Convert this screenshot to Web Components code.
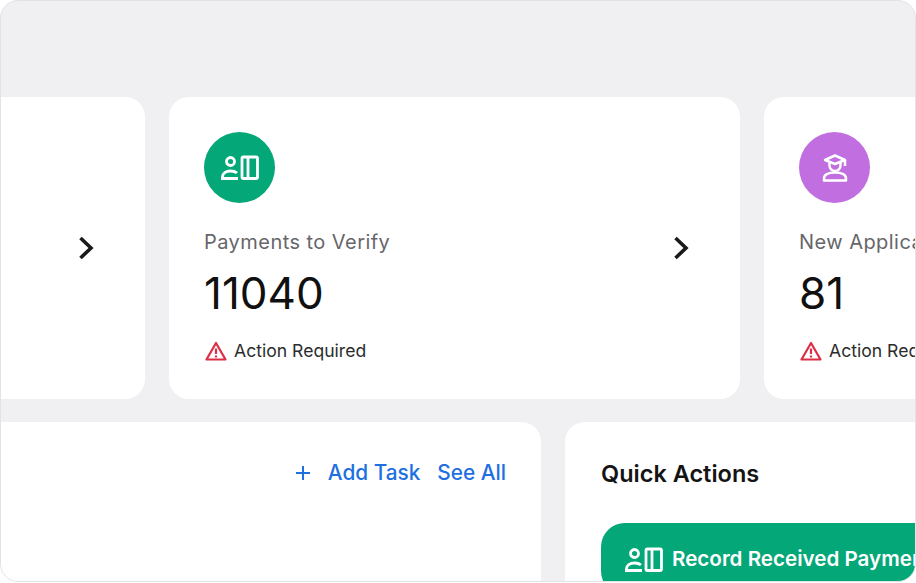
<!DOCTYPE html>
<html>
<head>
<meta charset="utf-8">
<title>Dashboard</title>
<style>
html, body { margin: 0; padding: 0; background: #fff; font-family: Inter, "Liberation Sans", sans-serif; }
</style>
</head>
<body>
<app-frame>
  <card-row>
    <stat-card></stat-card>
    <stat-card label="Payments to Verify" value="11040" tone="#04a777" icon="payment" note="Action Required"></stat-card>
    <stat-card label="New Applications" value="81" tone="#c16ee0" icon="student" note="Action Required"></stat-card>
  </card-row>
  <panel-row>
    <task-panel></task-panel>
    <quick-panel></quick-panel>
  </panel-row>
</app-frame>

<script>
/* icons */
const paymentIcon = `
<svg viewBox="0 0 38 25" width="38" height="25" fill="none" stroke="#fff" stroke-width="2.800" stroke-linejoin="round">
  <circle cx="9.500" cy="6.500" r="4"/>
  <path d="M1.500 23.500v-1.500c0-3.800 3.500-6 8-6 2.600 0 5 .7 6.500 2M0 23.500h17"/>
  <rect x="21" y="2" width="15.500" height="21.500" rx="1.500"/>
  <path d="M27 2v21.500"/>
</svg>`;
const studentIcon = `
<svg viewBox="0 0 26 28" width="26" height="28" fill="none" stroke="#fff" stroke-width="2.500" stroke-linejoin="round">
  <path d="M13 1.500 3 6l10 4 10-4z"/>
  <path d="M7.500 9v2.500a5.500 5.500 0 0 0 11 0V9M23 6v6"/>
  <path d="M2 26.500v-2c0-3.500 4-6 11-6s11 2.500 11 6v2z"/>
</svg>`;
const warnIcon = `
<svg viewBox="0 0 22 20" width="22" height="20" fill="none" stroke="#dc2f45" stroke-width="2.200" stroke-linejoin="round">
  <path d="M11 2 1.500 18.500h19z"/>
  <path d="M11 7.500v5.500M11 14.500v2"/>
</svg>`;
const chevron = `
<svg viewBox="0 0 16 24" width="16" height="24" fill="none" stroke="#1a1a1a" stroke-width="3.600">
  <path d="M2.500 2 13 12 2.500 22"/>
</svg>`;

class AppFrame extends HTMLElement {
  constructor() {
    super();
    this.attachShadow({ mode: "open" }).innerHTML = `
<style>
:host {
  display: flex;
  flex-direction: column;
  gap: 23px;
  box-sizing: border-box;
  width: 916px;
  height: 582px;
  padding-top: 96px;
  border: 1px solid #e3e3e5;
  border-radius: 18px;
  background: #f0f0f2;
  overflow: hidden;
}
</style>
<slot></slot>`;
  }
}
customElements.define("app-frame", AppFrame);

class CardRow extends HTMLElement {
  constructor() {
    super();
    this.attachShadow({ mode: "open" }).innerHTML = `
<style>
:host {
  display: flex;
  gap: 24px;
  margin-left: -427px;
  flex: none;
}
</style>
<slot></slot>`;
  }
}
customElements.define("card-row", CardRow);

class StatCard extends HTMLElement {
  connectedCallback() {
    const icon = this.getAttribute("icon") === "student" ? studentIcon : paymentIcon;
    const tone = this.getAttribute("tone") || "transparent";
    const label = this.getAttribute("label") || "";
    const value = this.getAttribute("value") || "";
    const note = this.getAttribute("note") || "";
    const body = label ? `
<div class="info">
  <div class="badge" style="background:${tone}">${icon}</div>
  <div class="label">${label}</div>
  <div class="value">${value}</div>
  <div class="note">${warnIcon}<span>${note}</span></div>
</div>` : `<div class="info"></div>`;
    this.attachShadow({ mode: "open" }).innerHTML = `
<style>
:host {
  display: flex;
  align-items: center;
  justify-content: space-between;
  flex: none;
  box-sizing: border-box;
  width: 571px;
  height: 302px;
  padding: 35px 51px 0 35px;
  background: #fff;
  border-radius: 20px;
}
.info { align-self: flex-start; white-space: nowrap; }
.badge {
  display: flex;
  align-items: center;
  justify-content: center;
  width: 71px;
  height: 71px;
  border-radius: 50%;
}
.label { margin-top: 27px; font-size: 20px; line-height: 24px; letter-spacing: .45px; color: #66666a; }
.value { margin-top: 15px; font-size: 44px; line-height: 48px; color: #101010; }
.note {
  display: flex;
  align-items: center;
  gap: 7px;
  margin-top: 22px;
  font-size: 17.600px;
  line-height: 24px;
  color: #2c2c2c;
}
.note svg { margin-left: 1px; }
.arrow { display: flex; margin-top: -35px; }
</style>
${body}
<div class="arrow">${chevron}</div>`;
  }
}
customElements.define("stat-card", StatCard);

class PanelRow extends HTMLElement {
  constructor() {
    super();
    this.attachShadow({ mode: "open" }).innerHTML = `
<style>
:host { display: flex; gap: 24px; margin-left: -32px; flex: 1; min-height: 0; }
</style>
<slot></slot>`;
  }
}
customElements.define("panel-row", PanelRow);

class TaskPanel extends HTMLElement {
  constructor() {
    super();
    this.attachShadow({ mode: "open" }).innerHTML = `
<style>
:host {
  display: flex;
  justify-content: flex-end;
  align-items: flex-start;
  flex: none;
  box-sizing: border-box;
  width: 572px;
  padding: 39px 35px 0;
  background: #fff;
  border-radius: 20px 20px 0 0;
  font-size: 20.800px;
  font-weight: 500;
  line-height: 24px;
  color: #1e6fe0;
}
.plus { display: flex; align-items: center; height: 24px; margin-right: 17px; }
.add { margin-right: 17px; }
</style>
<span class="plus"><svg viewBox="0 0 16 16" width="16" height="16" fill="none" stroke="#1e6fe0" stroke-width="2"><path d="M8 1v14M1 8h14"/></svg></span>
<span class="add">Add Task</span>
<span>See All</span>`;
  }
}
customElements.define("task-panel", TaskPanel);

class QuickPanel extends HTMLElement {
  constructor() {
    super();
    this.attachShadow({ mode: "open" }).innerHTML = `
<style>
:host {
  display: block;
  flex: none;
  box-sizing: border-box;
  width: 572px;
  padding: 38px 36px 0;
  background: #fff;
  border-radius: 20px 20px 0 0;
}
h2 { margin: 0; font-size: 23.500px; line-height: 28px; font-weight: 600; color: #141414; }
.action {
  display: flex;
  gap: 9px;
  box-sizing: border-box;
  height: 72px;
  margin-top: 35px;
  padding: 24px;
  background: #04a777;
  border-radius: 24px;
  color: #fff;
  font-size: 20.600px;
  line-height: 24px;
  font-weight: 600;
  white-space: nowrap;
}
.action svg { flex: none; }
</style>
<h2>Quick Actions</h2>
<div class="action">${paymentIcon}<span>Record Received Payment</span></div>`;
  }
}
customElements.define("quick-panel", QuickPanel);
</script>
</body>
</html>
